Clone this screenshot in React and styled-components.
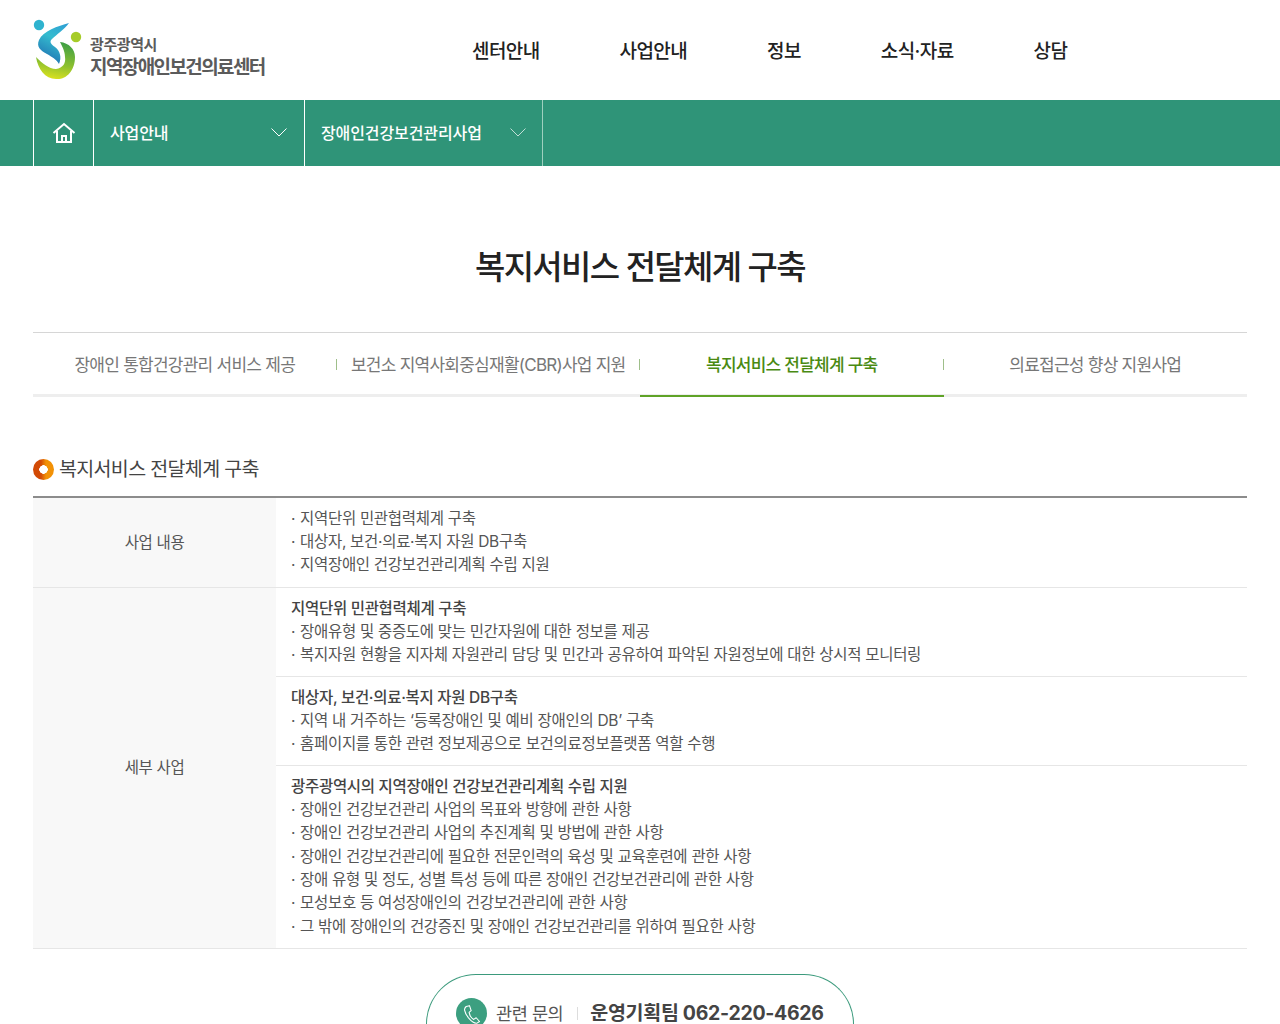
import React from "react";
import styled, { createGlobalStyle } from "styled-components";

const GlobalStyle = createGlobalStyle`
  html, body {
    margin: 0;
    padding: 0;
    background: #fff;
    overflow: hidden;
    height: 1024px;
  }
  body {
    font-family: Inter, "Noto Sans CJK KR", "Noto Sans", sans-serif;
    color: #444;
  }
`;

const Header = styled.header`
  align-items: center;
  display: flex;
  height: 100px;
  padding-left: 33px;
`;

const LogoWrap = styled.a`
  align-items: center;
  display: flex;
  width: 439px;
`;

const LogoText = styled.div`
  color: #5b5b5b;
  display: flex;
  flex-direction: column;
  font-weight: 700;
  margin: 17px 0 0 7px;

  span:first-child {
    font-size: 15px;
    letter-spacing: -0.4px;
    line-height: 18px;
  }
  span:last-child {
    font-size: 19px;
    letter-spacing: -1.6px;
    line-height: 26px;
    margin-top: 1px;
  }
`;

const Nav = styled.nav`
  display: flex;
  gap: 80px;
  padding-top: 4px;
`;

const NavItem = styled.a`
  color: #222;
  font-size: 19px;
  font-weight: 500;
  letter-spacing: -0.6px;
  line-height: 28px;
`;

const Crumbs = styled.div`
  background: #2f9478;
  display: flex;
  height: 66px;
  padding-left: 33px;
`;

const HomeCell = styled.div`
  align-items: center;
  border-left: 1px solid #fff;
  border-right: 1px solid #fff;
  display: flex;
  justify-content: center;
  width: 59px;
`;

const CrumbCell = styled.div`
  align-items: center;
  border-right: 1px solid ${p => (p.$last ? "#9fd0bf" : "#fff")};
  color: #fff;
  display: flex;
  font-size: 16px;
  font-weight: 500;
  justify-content: space-between;
  letter-spacing: -0.1px;
  padding: 0 ${p => p.$right}px 2px 16px;
  width: ${p => p.$width}px;

  svg {
    flex: none;
  }
`;

const PageTitle = styled.h2`
  color: #222;
  font-size: 33px;
  font-weight: 500;
  letter-spacing: -1.65px;
  line-height: 48px;
  margin: 77px 0 41px;
  text-align: center;
`;

const Content = styled.main`
  margin: 0 33px;
`;

const Tabs = styled.div`
  border-bottom: 3px solid #eee;
  border-top: 1px solid #d6d6d6;
  display: grid;
  grid-template-columns: repeat(4, 1fr);
  height: 61px;
`;

const Tab = styled.a`
  align-items: center;
  color: ${p => (p.$active ? "#4a8a12" : "#777")};
  display: flex;
  font-size: 17px;
  font-weight: ${p => (p.$active ? 500 : 400)};
  height: 64px;
  justify-content: center;
  letter-spacing: -0.75px;
  padding-bottom: ${p => (p.$active ? 2 : 4)}px;
  position: relative;
  box-sizing: border-box;
  border-bottom: ${p => (p.$active ? "2px solid #5fa327" : "none")};
  white-space: nowrap;

  &:not(:last-child)::after {
    background: #9fbf8a;
    content: "";
    height: 11px;
    position: absolute;
    right: 0;
    top: 26px;
    width: 1px;
  }
`;

const SectionTitle = styled.h3`
  align-items: center;
  color: #444;
  display: flex;
  font-size: 19.5px;
  font-weight: 400;
  gap: 5px;
  letter-spacing: -0.65px;
  line-height: 30px;
  margin: 57px 0 12px;
`;

const Dot = styled.i`
  background: radial-gradient(circle at 50% 50%, #fff 0 4px, transparent 4.5px),
    linear-gradient(90deg, #d24a05 0 38%, #f29106 62%);
  border-radius: 50%;
  display: block;
  height: 21px;
  width: 21px;
`;

const Table = styled.div`
  border-top: 2px solid #8c8c8c;
  display: grid;
  grid-template-columns: 243px 1fr;
`;

const Head = styled.div`
  align-items: center;
  background: #f8f8f8;
  border-bottom: 1px solid #e6e6e6;
  color: #555;
  display: flex;
  font-size: 15.5px;
  justify-content: center;
  letter-spacing: -0.35px;
  padding-bottom: 4px;
`;

const Cell = styled.div`
  border-bottom: 1px solid #e6e6e6;
  padding: 8.8px 15px 0;
  height: ${p => p.$height}px;
  box-sizing: border-box;
`;

const Stack = styled.div`
  display: flex;
  flex-direction: column;
`;

const Strong = styled.div`
  color: #444;
  font-size: 15.5px;
  font-weight: 500;
  letter-spacing: -0.3px;
  line-height: 23.3px;
`;

const Line = styled.div`
  color: #555;
  font-size: 15.5px;
  letter-spacing: -0.3px;
  line-height: 23.3px;
  white-space: nowrap;

  &::before {
    content: "·";
    display: inline-block;
    width: 9px;
  }
`;

const Contact = styled.div`
  align-items: flex-start;
  border: 1px solid #3b9a7c;
  border-radius: 50px 50px 0 0;
  border-bottom: none;
  box-sizing: border-box;
  display: flex;
  height: 80px;
  margin: 25px auto 0;
  padding: 23px 0 0 29px;
  width: 428px;
`;

const PhoneBadge = styled.span`
  align-items: center;
  background: #3c9f80;
  border-radius: 50%;
  display: flex;
  height: 31px;
  justify-content: center;
  width: 31px;
`;

const ContactLabel = styled.span`
  color: #555;
  font-size: 17.5px;
  letter-spacing: -0.4px;
  line-height: 31px;
  margin-left: 9px;
  padding-right: 15px;
  position: relative;

  &::after {
    background: #ddd;
    content: "";
    height: 13px;
    position: absolute;
    right: 0;
    top: 9px;
    width: 1px;
  }
`;

const ContactValue = styled.strong`
  color: #444;
  font-size: 19.5px;
  font-weight: 700;
  letter-spacing: -0.3px;
  line-height: 31px;
  margin-left: 12px;
  white-space: nowrap;
`;

const Logo = () => (
  <svg width="50" height="62" viewBox="0 0 50 62">
    <defs>
      <linearGradient id="blue" x1="0.9" y1="0" x2="0.5" y2="1">
        <stop offset="0" stopColor="#2f9fd4" />
        <stop offset="0.45" stopColor="#35bccf" />
        <stop offset="1" stopColor="#2176b4" />
      </linearGradient>
      <linearGradient id="lime" x1="0.6" y1="0" x2="0.4" y2="1">
        <stop offset="0" stopColor="#3f9f45" />
        <stop offset="0.6" stopColor="#8fc12e" />
        <stop offset="1" stopColor="#dbe21f" />
      </linearGradient>
    </defs>
    <circle cx="6" cy="6" r="5.2" fill="#2fb3cf" />
    <circle cx="43" cy="18" r="5.2" fill="#a6cc28" />
    <path d="M36 4 C25 7 10 12 6 21 C3 28 8 32 14 35 C19 38 23 40 26 45 C29 38 27 32 22 28 C18 25 16 23 19 20 C24 15 31 11 36 4 Z" fill="url(#blue)" />
    <path d="M27 23 C36 24 42 30 42 38 C42 52 33 61 23 60 C12 60 5 50 3 38 C9 44 16 50 23 50 C30 49 33 44 32 38 C32 32 29 27 27 23 Z" fill="url(#lime)" />
  </svg>
);

const HomeIcon = () => (
  <svg width="24" height="22" viewBox="0 0 24 22" fill="none" stroke="#fff" strokeWidth="2" strokeLinejoin="miter">
    <path d="M1.5 11 L12 2 L22.5 11" />
    <path d="M5 9 V20 H19 V9" />
    <path d="M10 20 V14 H14 V20" />
  </svg>
);

const Chevron = ({ dim }) => (
  <svg width="16" height="9" viewBox="0 0 16 9" fill="none" stroke="#fff" strokeWidth="1" opacity={dim ? 0.7 : 1}>
    <path d="M0.5 0.5 L8 8 L15.5 0.5" />
  </svg>
);

const PhoneIcon = () => (
  <svg width="20" height="22" viewBox="0 0 24 24" fill="none" stroke="#fff" strokeWidth="1.3" strokeLinejoin="round">
    <path d="M5 3 L9 2 L11 8 L8.5 10 C9 13 11.5 17 14 18.5 L17 16.5 L21 21 L18 23 C12 24 4 13 3 7 C3 5 4 4 5 3 Z" />
  </svg>
);

const summary = [
  "지역단위 민관협력체계 구축",
  "대상자, 보건·의료·복지 자원 DB구축",
  "지역장애인 건강보건관리계획 수립 지원",
];

const details = [
  {
    title: "지역단위 민관협력체계 구축",
    height: 89,
    lines: [
      "장애유형 및 중증도에 맞는 민간자원에 대한 정보를 제공",
      "복지자원 현황을 지자체 자원관리 담당 및 민간과 공유하여 파악된 자원정보에 대한 상시적 모니터링",
    ],
  },
  {
    title: "대상자, 보건·의료·복지 자원 DB구축",
    height: 89,
    lines: [
      "지역 내 거주하는 ‘등록장애인 및 예비 장애인의 DB’ 구축",
      "홈페이지를 통한 관련 정보제공으로 보건의료정보플랫폼 역할 수행",
    ],
  },
  {
    title: "광주광역시의 지역장애인 건강보건관리계획 수립 지원",
    height: 183,
    lines: [
      "장애인 건강보건관리 사업의 목표와 방향에 관한 사항",
      "장애인 건강보건관리 사업의 추진계획 및 방법에 관한 사항",
      "장애인 건강보건관리에 필요한 전문인력의 육성 및 교육훈련에 관한 사항",
      "장애 유형 및 정도, 성별 특성 등에 따른 장애인 건강보건관리에 관한 사항",
      "모성보호 등 여성장애인의 건강보건관리에 관한 사항",
      "그 밖에 장애인의 건강증진 및 장애인 건강보건관리를 위하여 필요한 사항",
    ],
  },
];

const tabs = [
  "장애인 통합건강관리 서비스 제공",
  "보건소 지역사회중심재활(CBR)사업 지원",
  "복지서비스 전달체계 구축",
  "의료접근성 향상 지원사업",
];

export default function App() {
  return (
    <>
      <GlobalStyle />
      <Header>
        <LogoWrap>
          <Logo />
          <LogoText>
            <span>광주광역시</span>
            <span>지역장애인보건의료센터</span>
          </LogoText>
        </LogoWrap>
        <Nav>
          <NavItem>센터안내</NavItem>
          <NavItem>사업안내</NavItem>
          <NavItem>정보</NavItem>
          <NavItem>소식·자료</NavItem>
          <NavItem>상담</NavItem>
        </Nav>
      </Header>
      <Crumbs>
        <HomeCell><HomeIcon /></HomeCell>
        <CrumbCell $width={177} $right={17}>사업안내<Chevron /></CrumbCell>
        <CrumbCell $width={205} $right={16} $last>장애인건강보건관리사업<Chevron dim /></CrumbCell>
      </Crumbs>
      <PageTitle>복지서비스 전달체계 구축</PageTitle>
      <Content>
        <Tabs>
          {tabs.map((t, i) => (
            <Tab key={t} $active={i === 2}>{t}</Tab>
          ))}
        </Tabs>
        <SectionTitle><Dot />복지서비스 전달체계 구축</SectionTitle>
        <Table>
          <Head>사업 내용</Head>
          <Cell $height={90}>
            {summary.map(s => <Line key={s}>{s}</Line>)}
          </Cell>
          <Head>세부 사업</Head>
          <Stack>
            {details.map(d => (
              <Cell key={d.title} $height={d.height}>
                <Strong>{d.title}</Strong>
                {d.lines.map(l => <Line key={l}>{l}</Line>)}
              </Cell>
            ))}
          </Stack>
        </Table>
        <Contact>
          <PhoneBadge><PhoneIcon /></PhoneBadge>
          <ContactLabel>관련 문의</ContactLabel>
          <ContactValue>운영기획팀 062-220-4626</ContactValue>
        </Contact>
      </Content>
    </>
  );
}
